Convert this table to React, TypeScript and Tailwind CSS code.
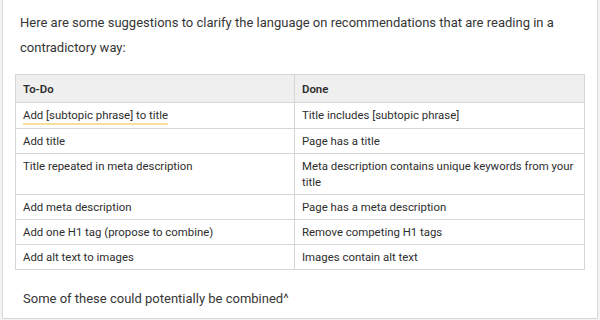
import React from "react";

const rows: [string, string][] = [
  ["Add [subtopic phrase] to title", "Title includes [subtopic phrase]"],
  ["Add title", "Page has a title"],
  ["Title repeated in meta description", "Meta description contains unique keywords from your title"],
  ["Add meta description", "Page has a meta description"],
  ["Add one H1 tag (propose to combine)", "Remove competing H1 tags"],
  ["Add alt text to images", "Images contain alt text"],
];

export default function App() {
  return (
    <div className="w-[600px] h-[320px] bg-[#f3f3f3] overflow-hidden" style={{ fontFamily: "Roboto, 'Noto Sans', sans-serif" }}>
      <div className="mx-[2px] h-[319px] bg-white border border-t-0 border-[#d9d9d9] pt-[10px] pl-[17px] pr-[12px]">
        <p className="text-[13px] leading-[25px] text-[#363636] pr-[20px]">
          Here are some suggestions to clarify the language on recommendations that are reading in a contradictory way:
        </p>
        <table className="mt-[14px] ml-[-5px] w-[570px] border-collapse text-[11.4px] leading-[16px] text-[#2e2e2e] table-fixed">
          <colgroup>
            <col className="w-[279px]" />
            <col />
          </colgroup>
          <thead>
            <tr className="bg-[#efefef]">
              <th className="border border-[#d6d6d6] h-[28px] px-[7px] text-left font-semibold">To-Do</th>
              <th className="border border-[#d6d6d6] h-[28px] px-[7px] text-left font-semibold">Done</th>
            </tr>
          </thead>
          <tbody>
            {rows.map(([a, b], i) => (
              <tr key={i}>
                <td className="border border-[#d6d6d6] px-[7px] pt-[4px] pb-[3px] align-top">
                  {i === 0 ? (
                    <span className="inline-block border-b-2 border-[#f8df9c] leading-[15px]">{a}</span>
                  ) : (
                    a
                  )}
                </td>
                <td className="border border-[#d6d6d6] px-[7px] pt-[4px] pb-[4px] align-top">{b}</td>
              </tr>
            ))}
          </tbody>
        </table>
        <p className="mt-[19px] ml-[3px] text-[13px] leading-[20px] text-[#363636]">
          Some of these could potentially be combined^
        </p>
      </div>
    </div>
  );
}
